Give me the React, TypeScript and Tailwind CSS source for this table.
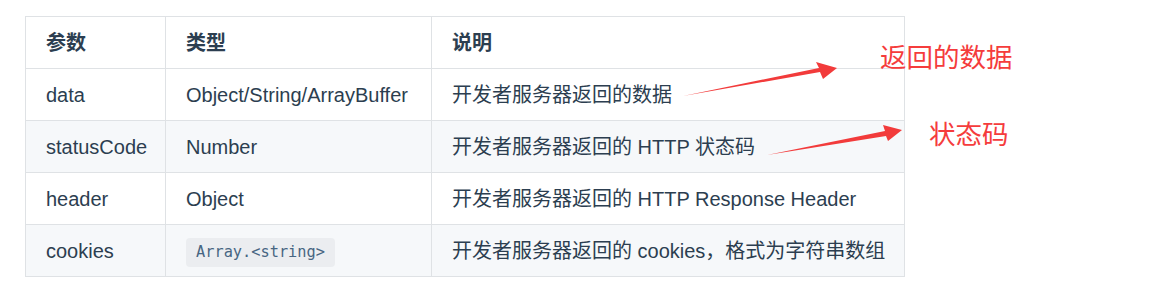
import React from 'react';

interface Row {
  name: string;
  type: string;
  desc: string;
  code?: boolean;
}

const rows: Row[] = [
  { name: 'data', type: 'Object/String/ArrayBuffer', desc: '开发者服务器返回的数据' },
  { name: 'statusCode', type: 'Number', desc: '开发者服务器返回的 HTTP 状态码' },
  { name: 'header', type: 'Object', desc: '开发者服务器返回的 HTTP Response Header' },
  { name: 'cookies', type: 'Array.<string>', desc: '开发者服务器返回的 cookies，格式为字符串数组', code: true },
];

const cell = 'border border-[#dfe2e5] px-5 h-[52px] text-left align-middle whitespace-nowrap';

export default function App() {
  return (
    <div
      className="relative w-[1152px] h-[292px] bg-white text-[#2c3e50] text-[20px]"
      style={{ fontFamily: '"Liberation Sans", "Noto Sans CJK SC", sans-serif' }}
    >
      <div className="pt-[16px] pl-[25px]">
        <table className="table-fixed border-collapse w-[879px]">
          <thead>
            <tr className="bg-white">
              <th className={`${cell} w-[140px] font-bold`}>参数</th>
              <th className={`${cell} w-[266px] font-bold`}>类型</th>
              <th className={`${cell} w-[473px] font-bold`}>说明</th>
            </tr>
          </thead>
          <tbody>
            {rows.map((r, i) => (
              <tr key={r.name} className={i % 2 === 1 ? 'bg-[#f6f8fa]' : 'bg-white'}>
                <td className={cell}>{r.name}</td>
                <td className={cell}>
                  {r.code ? (
                    <code
                      className="inline-block rounded-[4px] bg-[#ebedf0] px-[10px] py-[3px] text-[15.3px] leading-[23px] text-[#476582]"
                      style={{ fontFamily: '"DejaVu Sans Mono", monospace' }}
                    >
                      {r.type}
                    </code>
                  ) : (
                    r.type
                  )}
                </td>
                <td className={cell}>{r.desc}</td>
              </tr>
            ))}
          </tbody>
        </table>
      </div>

      {/* annotations */}
      <svg className="absolute left-0 top-0" width="1152" height="292">
        <polygon points="683,96 819,68 816,62 837,68 823,79 820,72" fill="#f23b3b" />
        <polygon points="767,155 885,131 883,125 902,130 888,141 886,136" fill="#f23b3b" />
      </svg>
      <span className="absolute left-[880px] top-[40px] text-[26.5px] leading-[36px] text-[#f53c3c]">
        返回的数据
      </span>
      <span className="absolute left-[929px] top-[117px] text-[26.5px] leading-[36px] text-[#f53c3c]">
        状态码
      </span>
    </div>
  );
}
